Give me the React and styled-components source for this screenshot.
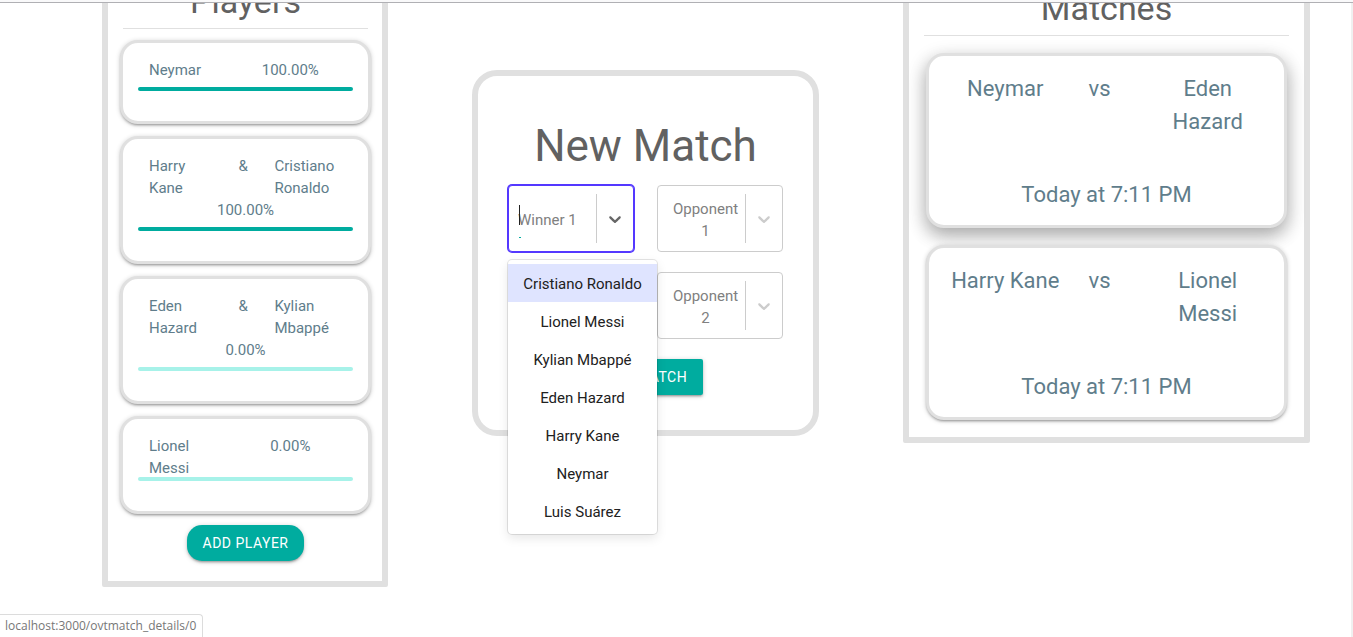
import React from "react";
import styled, { createGlobalStyle, css } from "styled-components";

const GlobalStyle = createGlobalStyle`
  *, *::before, *::after { box-sizing: border-box; }
  body {
    margin: 0;
    background: #fff;
    color: #607d8b;
    font-family: Roboto, sans-serif;
    font-size: 15px;
    line-height: 22px;
  }
  h1, h2, ul, p { margin: 0; padding: 0; font-weight: 400; }
  ul { list-style: none; }
`;

const cardShadow = "0 2px 2px 0 rgba(0,0,0,.14), 0 3px 1px -2px rgba(0,0,0,.12), 0 1px 5px 0 rgba(0,0,0,.2)";

const TopEdge = styled.header`
  height: 3px;
  background: #f9f9fa;
  border-bottom: 1px solid #b0b0b4;
`;

const Page = styled.main`
  min-height: calc(100vh - 3px);
  overflow: hidden;
  border-right: 2px solid #f0f0f0;
`;

const Columns = styled.div`
  display: grid;
  grid-template-columns: 286fr 347fr 407fr;
  column-gap: 84px;
  align-items: start;
  margin-top: -60px;
  padding: 0 41px 0 102px;
`;

const Panel = styled.section`
  border: 6px solid #e0e0e0;
  border-radius: 2px;
  text-align: center;
`;

const PlayersPanel = styled(Panel)`
  padding: 33px 11px 20px 12px;
`;

const MatchesPanel = styled(Panel)`
  padding: 40px 17px 17px;
`;

const FormPanel = styled(Panel)`
  margin-top: 127px;
  padding: 46px 30px 35px;
  border-radius: 25px;
`;

const Heading = styled.h2`
  color: #616161;
  font-size: 34px;
  line-height: 38px;
`;

const Title = styled.h1`
  margin-bottom: 15px;
  color: #616161;
  font-size: 44px;
  line-height: 48px;
`;

const Divider = styled.div`
  height: 1px;
  margin: 8px ${(p) => p.$inset}px ${(p) => p.$after}px;
  background: #e0e0e0;
`;

const List = styled.ul`
  display: flex;
  flex-direction: column;
  gap: ${(p) => p.$gap}px;
`;

const PlayerCard = styled.li`
  padding: 16px 15px 30px;
  border: 3px solid #e0e0e0;
  border-radius: 18px;
  background: #fff;
  box-shadow: ${cardShadow};
`;

const PlayerRow = styled.div`
  display: grid;
  grid-template-columns: ${(p) => (p.$team ? "5fr 2fr 5fr" : "5fr 1fr 5fr 1fr")};
`;

const Name = styled.span`
  padding-left: 11px;
  padding-right: ${(p) => (p.$joiner ? 0 : 11)}px;
  text-align: left;
`;

const Rate = styled.span`
  grid-column: 3;
`;

const Progress = styled.div`
  height: 4px;
  margin-top: ${(p) => (p.$tight ? -2 : 6)}px;
  border-radius: 2px;
  background: #a7f2e9;
  overflow: hidden;
`;

const ProgressFill = styled.div`
  height: 100%;
  background: #00ac9f;
`;

const Button = styled.button`
  height: 36px;
  padding: 0 16px;
  border: 0;
  border-radius: ${(p) => (p.$round ? 15 : 2)}px;
  background: #00ac9f;
  color: #fff;
  font: 400 14px/36px Roboto, sans-serif;
  letter-spacing: 0.5px;
  text-transform: uppercase;
  cursor: pointer;
  box-shadow: ${cardShadow};
`;

const PlayerActions = styled.div`
  margin-top: 11px;
`;

const FormActions = styled.div`
  margin-top: 20px;
`;

const Fields = styled.div`
  display: grid;
  grid-template-columns: 1fr 1fr;
  gap: 20px 23px;
`;

const Field = styled.div`
  position: relative;
`;

const Control = styled.div`
  position: relative;
  display: flex;
  align-items: center;
  height: 67px;
  border: 1px solid #ccc;
  border-radius: 4px;
  background: #fff;
  ${(p) =>
    p.$focused &&
    css`
      border-color: #5438ff;
      box-shadow: 0 0 0 1px #5438ff;
    `}
`;

const Placeholder = styled.label`
  flex: 1;
  min-width: 0;
  padding: 2px 4px 0 12px;
  color: #808080;
`;

const HiddenSelect = styled.select`
  position: absolute;
  inset: 0;
  width: 100%;
  height: 100%;
  opacity: 0;
  cursor: pointer;
`;

const SearchBox = styled.div`
  position: relative;
  flex: 1;
  min-width: 0;
  padding: 2px 0 0 9px;

  &::before {
    content: "";
    position: absolute;
    left: 10px;
    top: -2px;
    width: 1px;
    height: 20px;
    background: #222;
  }

  &::after {
    content: "";
    position: absolute;
    left: 10px;
    bottom: -7px;
    width: 2px;
    height: 1px;
    background: #00ac9f;
  }
`;

const SearchInput = styled.input`
  display: block;
  width: 100%;
  height: 22px;
  padding: 0;
  border: 0;
  outline: 0;
  background: transparent;
  color: #222;
  font: 15px/22px Roboto, sans-serif;

  &::placeholder {
    color: #808080;
    opacity: 1;
  }
`;

const Indicator = styled.span`
  display: flex;
  align-items: center;
  align-self: stretch;
  margin: 8px 0;
  padding: 0 8px;
  border-left: 1px solid #ccc;
  color: ${(p) => (p.$focused ? "#666" : "#ccc")};
`;

const Menu = styled.ul`
  position: absolute;
  z-index: 1;
  top: calc(100% + 8px);
  left: 0;
  width: calc(100% + 23px);
  padding: 4px 0;
  border-radius: 4px;
  background: #fff;
  box-shadow: 0 0 0 1px rgba(0, 0, 0, 0.1), 0 4px 11px rgba(0, 0, 0, 0.1);
`;

const Option = styled.li`
  padding: 9px 12px 7px;
  background: ${(p) => (p.$active ? "#dfe4ff" : "transparent")};
  color: #212121;
  white-space: nowrap;
`;

const MatchLink = styled.a`
  display: block;
  padding: 16px 4px 14px;
  border: 3px solid #e0e0e0;
  border-radius: 18px;
  background: #fff;
  color: inherit;
  font-size: 22px;
  line-height: 33px;
  text-decoration: none;
  box-shadow: ${(p) =>
    p.$raised ? "0 8px 17px 0 rgba(0,0,0,.2), 0 6px 20px 0 rgba(0,0,0,.19)" : cardShadow};
`;

const MatchSides = styled.div`
  display: grid;
  grid-template-columns: 5fr 2fr 5fr;
  margin-bottom: 40px;
`;

const Side = styled.span`
  padding: 0 12px;
`;

const Versus = styled.span`
  padding-left: 11px;
  text-align: left;
`;

const StatusBar = styled.footer`
  position: fixed;
  left: 0;
  bottom: 0;
  height: 23px;
  padding: 0 6px 0 5px;
  border: 1px solid #dcdcdc;
  border-width: 1px 1px 0 0;
  border-radius: 0 4px 0 0;
  background: #fff;
  color: #777;
  font: 12px/22px "Open Sans", sans-serif;
`;

const players = [
  { names: ["Neymar"], rate: 100 },
  { names: ["Harry Kane", "Cristiano Ronaldo"], rate: 100 },
  { names: ["Eden Hazard", "Kylian Mbappé"], rate: 0 },
  { names: ["Lionel Messi"], rate: 0, tight: true },
];

const matches = [
  { winner: "Neymar", loser: "Eden Hazard", time: "Today at 7:11 PM", raised: true },
  { winner: "Harry Kane", loser: "Lionel Messi", time: "Today at 7:11 PM" },
];

const options = [
  "Cristiano Ronaldo",
  "Lionel Messi",
  "Kylian Mbappé",
  "Eden Hazard",
  "Harry Kane",
  "Neymar",
  "Luis Suárez",
];

function Chevron() {
  return (
    <svg width="20" height="20" viewBox="0 0 20 20" fill="currentColor" aria-hidden="true">
      <path d="M4.516 7.548c0.436-0.446 1.043-0.481 1.576 0l3.908 3.747 3.908-3.747c0.533-0.481 1.141-0.446 1.574 0 0.436 0.445 0.408 1.197 0 1.615-0.406 0.418-4.695 4.502-4.695 4.502-0.217 0.223-0.502 0.335-0.787 0.335s-0.57-0.112-0.789-0.335c0 0-4.287-4.084-4.695-4.502s-0.436-1.17 0-1.615z" />
    </svg>
  );
}

function Player({ names, rate, tight }) {
  const team = names.length > 1;
  const percent = `${rate.toFixed(2)}%`;
  return (
    <PlayerCard>
      <PlayerRow $team={team}>
        <Name>{names[0]}</Name>
        {team && <Name $joiner>&amp;</Name>}
        {team ? <Name>{names[1]}</Name> : <Rate>{percent}</Rate>}
      </PlayerRow>
      {team && <div>{percent}</div>}
      <Progress $tight={tight}>
        <ProgressFill style={{ width: `${rate}%` }} />
      </Progress>
    </PlayerCard>
  );
}

function SelectField({ id, label }) {
  return (
    <Field>
      <Control>
        <Placeholder htmlFor={id}>{label}</Placeholder>
        <Indicator>
          <Chevron />
        </Indicator>
        <HiddenSelect id={id} defaultValue="">
          <option value="" />
          {options.map((name) => (
            <option key={name}>{name}</option>
          ))}
        </HiddenSelect>
      </Control>
    </Field>
  );
}

function OpenField({ label }) {
  return (
    <Field>
      <Control $focused>
        <SearchBox>
          <SearchInput
            role="combobox"
            aria-label={label}
            aria-expanded="true"
            aria-controls="winner-options"
            placeholder={label}
          />
        </SearchBox>
        <Indicator $focused>
          <Chevron />
        </Indicator>
      </Control>
      <Menu id="winner-options" role="listbox">
        {options.map((name, i) => (
          <Option key={name} role="option" aria-selected={i === 0} $active={i === 0}>
            {name}
          </Option>
        ))}
      </Menu>
    </Field>
  );
}

export default function App() {
  return (
    <>
      <GlobalStyle />
      <TopEdge />
      <Page>
        <Columns>
          <PlayersPanel>
            <Heading>Players</Heading>
            <Divider $inset={3} $after={11} />
            <List $gap={12}>
              {players.map((p) => (
                <Player key={p.names[0]} {...p} />
              ))}
            </List>
            <PlayerActions>
              <Button type="button" $round>Add Player</Button>
            </PlayerActions>
          </PlayersPanel>

          <FormPanel>
            <Title>New Match</Title>
            <form>
              <Fields>
                <OpenField label="Winner 1" />
                <SelectField id="opponent-1" label="Opponent 1" />
                <SelectField id="winner-2" label="Winner 2" />
                <SelectField id="opponent-2" label="Opponent 2" />
              </Fields>
              <FormActions>
                <Button type="button">Add Match</Button>
              </FormActions>
            </form>
          </FormPanel>

          <MatchesPanel>
            <Heading>Matches</Heading>
            <Divider $inset={-2} $after={17} />
            <List $gap={17}>
              {matches.map((m, i) => (
                <li key={m.winner}>
                  <MatchLink href={`/ovtmatch_details/${i}`} $raised={m.raised}>
                    <MatchSides>
                      <Side>{m.winner}</Side>
                      <Versus>vs</Versus>
                      <Side>{m.loser}</Side>
                    </MatchSides>
                    <p>{m.time}</p>
                  </MatchLink>
                </li>
              ))}
            </List>
          </MatchesPanel>
        </Columns>
      </Page>
      <StatusBar>localhost:3000/ovtmatch_details/0</StatusBar>
    </>
  );
}
